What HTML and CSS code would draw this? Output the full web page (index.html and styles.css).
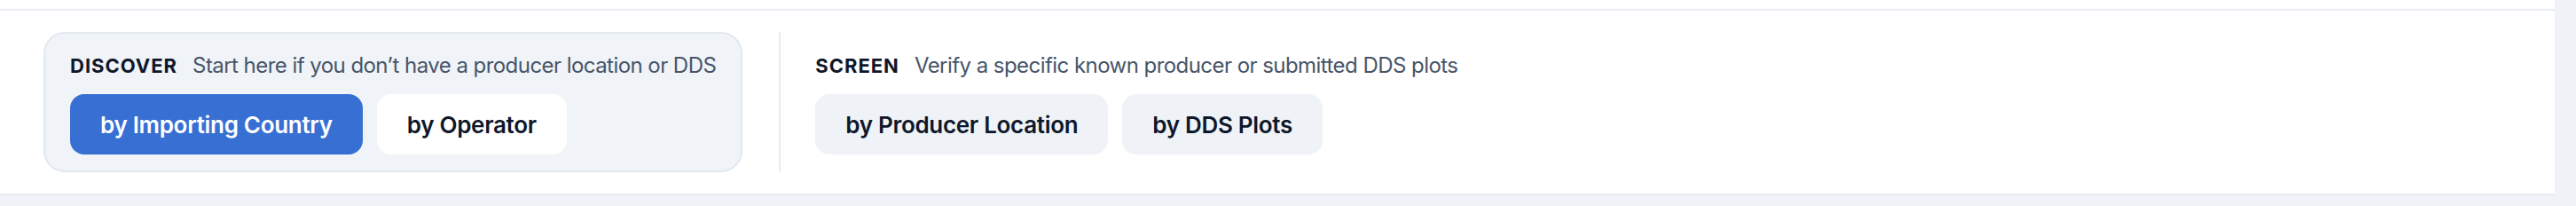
FILE: index.html
```html
<!DOCTYPE html>
<html lang="en">
<head>
  <meta charset="UTF-8">
  <meta name="viewport" content="width=device-width, initial-scale=1.0">
  <title>Search modes</title>
  <link rel="stylesheet" href="styles.css">
</head>
<body>

  <div class="page">
    <div class="main">
      <div class="topbar"></div>

      <!-- Search mode picker -->
      <div class="modes">
        <div class="group discover">
          <div class="group-head">
            <span class="group-label">DISCOVER</span>
            <span class="group-desc">Start here if you don’t have a producer location or DDS</span>
          </div>
          <div class="group-buttons">
            <button class="mode active">by Importing Country</button>
            <button class="mode white">by Operator</button>
          </div>
        </div>

        <div class="group screen">
          <div class="group-head">
            <span class="group-label">SCREEN</span>
            <span class="group-desc">Verify a specific known producer or submitted DDS plots</span>
          </div>
          <div class="group-buttons">
            <button class="mode">by Producer Location</button>
            <button class="mode">by DDS Plots</button>
          </div>
        </div>
      </div>
    </div>
    <div class="gutter"></div>
  </div>

</body>
</html>
```

FILE: styles.css
```css
body {
  font-family: Inter, 'Noto Sans', sans-serif;
  margin: 0;
  padding: 0;
  background-color: #eff3f8;
  color: #0f172a;
}
.page {
  display: flex;
  height: 232px;
}
.main {
  flex: 1;
  display: flex;
  flex-direction: column;
}
.gutter {
  width: 24px;
  background-color: #eff3f8;
}
.topbar {
  height: 10px;
  background-color: #fff;
  border-bottom: 2px solid #e8ecf1;
}
.modes {
  display: flex;
  align-items: stretch;
  background-color: #fff;
  padding: 24px 48px 24px 49px;
  border-bottom: 2px solid #e8ecf1;
}
.group {
  display: flex;
  flex-direction: column;
  gap: 14px;
  padding: 18px 28px;
  border: 2px solid transparent;
}
.group.discover {
  background-color: #f0f3f8;
  border-color: #e2e8f0;
  border-radius: 24px;
}
.group.screen {
  margin-left: 41px;
  border-width: 0 0 0 2px;
  border-left-color: #e8ecf1;
  border-radius: 0;
  padding: 20px 0 20px 39px;
}
.group-head {
  display: flex;
  align-items: baseline;
  gap: 17px;
  height: 36px;
  line-height: 36px;
}
.group-label {
  font-size: 22px;
  font-weight: 700;
  letter-spacing: 1px;
  color: #0f172a;
}
.group-desc {
  font-size: 24px;
  color: #475569;
  letter-spacing: -0.55px;
}
.group-buttons {
  display: flex;
  gap: 16px;
}
.mode {
  font-family: inherit;
  height: 68px;
  padding: 0 34px;
  border: none;
  border-radius: 16px;
  background-color: #eff3f8;
  color: #0f172a;
  font-size: 26px;
  font-weight: 600;
  letter-spacing: -0.3px;
  cursor: pointer;
}
.mode.white {
  background-color: #fff;
}
.mode.active {
  background-color: #376fd3;
  color: #fff;
}
```
